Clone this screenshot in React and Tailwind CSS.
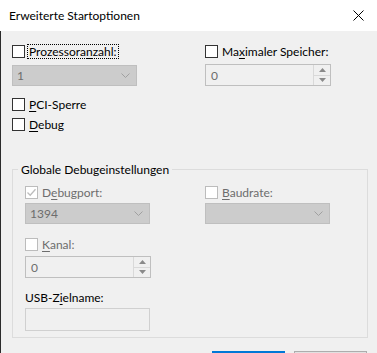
import React from "react";

const font = { fontFamily: "Lato, 'Liberation Sans', sans-serif" };

function Check({ disabled = false, checked = false }) {
  return (
    <span
      className={
        "w-[13px] h-[13px] shrink-0 border flex items-center justify-center " +
        (disabled ? "border-[#bcbcbc] bg-white" : "border-[#333333] bg-white")
      }
    >
      {checked && (
        <svg width="11" height="11" viewBox="0 0 11 11">
          <path d="M1.5 5.5 L4.2 8.2 L9.5 2.2" fill="none" stroke="#bcbcbc" strokeWidth="1.3" />
        </svg>
      )}
    </span>
  );
}

function U({ children }) {
  return <span className="underline underline-offset-[2px] decoration-1">{children}</span>;
}

function Chevron() {
  return (
    <svg width="9" height="5" viewBox="0 0 9 5" className="mr-[6px]">
      <path d="M0.5 0.5 L4.5 4.5 L8.5 0.5" fill="none" stroke="#a0a0a0" strokeWidth="1" />
    </svg>
  );
}

function Combo({ value }) {
  return (
    <div className="w-[125px] h-[21px] bg-[#cccccc] border border-[#bfbfbf] flex items-center justify-between">
      <span className="pl-[4px] text-[12px] text-[#6d6d6d]">{value}</span>
      <Chevron />
    </div>
  );
}

function Spin({ value }) {
  return (
    <div className="w-[126px] h-[22px] bg-[#f0f0f0] border border-[#bfbfbf] flex">
      <div className="flex-1 flex items-center pl-[5px] text-[12px] text-[#6d6d6d]">{value}</div>
      <div className="w-[17px] flex flex-col border-l border-[#d9d9d9]">
        <div className="flex-1 flex items-center justify-center border-b border-[#d9d9d9]">
          <svg width="7" height="4" viewBox="0 0 7 4">
            <path d="M0 4 L3.5 0 L7 4 Z" fill="#8a8a8a" />
          </svg>
        </div>
        <div className="flex-1 flex items-center justify-center">
          <svg width="7" height="4" viewBox="0 0 7 4">
            <path d="M0 0 L3.5 4 L7 0 Z" fill="#8a8a8a" />
          </svg>
        </div>
      </div>
    </div>
  );
}

export default function App() {
  return (
    <div className="w-[377px] h-[353px] overflow-hidden bg-[#f0f0f0] text-[12px] leading-[15px] text-black" style={font}>
      <div className="h-[31px] bg-white flex items-center justify-between pl-[9px] pr-[13px]">
        <span className="text-[12px] text-black">Erweiterte Startoptionen</span>
        <svg width="11" height="11" viewBox="0 0 11 11">
          <path d="M0.5 0.5 L10.5 10.5 M10.5 0.5 L0.5 10.5" stroke="#000" strokeWidth="1" />
        </svg>
      </div>
      <div className="h-[322px] border-l border-[#2b2b2b] pl-[11px] pt-[13px]">
        <div className="grid grid-cols-[193px_1fr]">
          <div className="flex flex-col">
            <div className="h-[15px] flex items-center gap-[2px]">
              <Check />
              <span className="border border-dotted border-black px-[1px] leading-[13px] h-[15px]">
                Prozessora<U>n</U>zahl:
              </span>
            </div>
            <div className="mt-[6px]">
              <Combo value="1" />
            </div>
            <div className="h-[15px] mt-[11px] flex items-center gap-[4px]">
              <Check />
              <span><U>P</U>CI-Sperre</span>
            </div>
            <div className="h-[15px] mt-[5px] flex items-center gap-[4px]">
              <Check />
              <span><U>D</U>ebug</span>
            </div>
          </div>
          <div className="flex flex-col">
            <div className="h-[15px] flex items-center gap-[4px]">
              <Check />
              <span>Ma<U>x</U>imaler Speicher:</span>
            </div>
            <div className="mt-[5px]">
              <Spin value="0" />
            </div>
          </div>
        </div>

        <fieldset className="mt-[30px] w-[356px] h-[176px] border border-[#dcdcdc]">
          <legend className="ml-[5px] px-[3px] text-[#000]">Globale Debugeinstellungen</legend>
          <div className="grid grid-cols-[180px_1fr] mt-[8px] pl-[12px]">
            <div className="flex flex-col">
              <div className="h-[15px] flex items-center gap-[4px] text-[#6d6d6d]">
                <Check disabled checked />
                <span>D<U>e</U>bugport:</span>
              </div>
              <div className="mt-[3px]">
                <Combo value="1394" />
              </div>
              <div className="h-[15px] mt-[13px] flex items-center gap-[4px] text-[#6d6d6d]">
                <Check disabled />
                <span><U>K</U>anal:</span>
              </div>
              <div className="mt-[4px]">
                <Spin value="0" />
              </div>
              <div className="h-[15px] mt-[12px] flex items-center">
                <span>USB-Z<U>i</U>elname:</span>
              </div>
              <div className="mt-[3px] w-[125px] h-[23px] border border-[#d0d0d0] bg-[#f0f0f0]" />
            </div>
            <div className="flex flex-col">
              <div className="h-[15px] flex items-center gap-[4px] text-[#6d6d6d]">
                <Check disabled />
                <span><U>B</U>audrate:</span>
              </div>
              <div className="mt-[3px]">
                <Combo value="" />
              </div>
            </div>
          </div>
        </fieldset>

        <div className="mt-[13px] flex justify-end gap-[9px] pr-[10px]">
          <div className="w-[73px] h-[23px] bg-[#0078d7]" />
          <div className="w-[73px] h-[23px] bg-[#e1e1e1] border border-[#adadad]" />
        </div>
      </div>
    </div>
  );
}
